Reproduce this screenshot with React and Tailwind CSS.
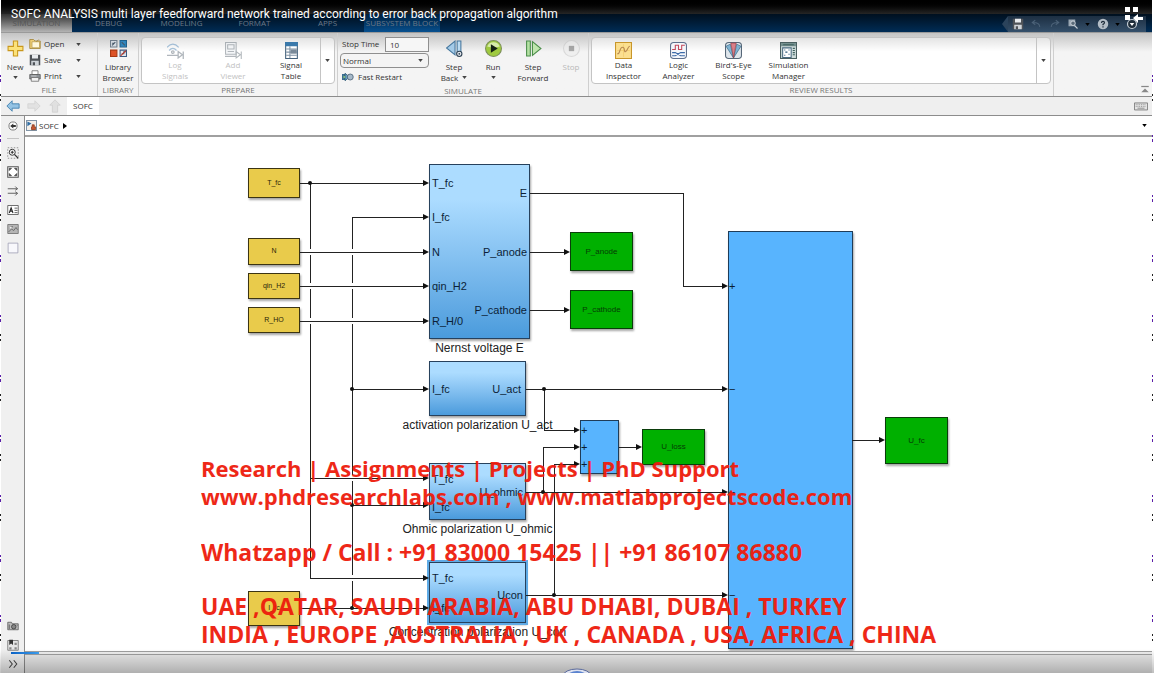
import React, { useState } from 'react';

const Caret = ({ className = 'text-[#444]' }) => (
	<svg width="5" height="3" viewBox="0 0 6 4" className={`shrink-0 ${className}`}>
		<path d="M0 0h6L3 4z" fill="currentColor" />
	</svg>
);

const icons = {
	new: (
		<path d="M6 1h4v5h5v4h-5v5H6v-5H1V6h5z" fill="#fbe27a" stroke="#c9971c" />
	),
	open: (
		<>
			<path d="M1 2h5l2 2h7v10H1z" fill="#f0cf74" stroke="#9a7b2e" />
			<path d="M4 5h10v8H4z" fill="#fff8dc" stroke="#b79a4f" />
			<path d="M10 5l3-3" stroke="#9a7b2e" />
		</>
	),
	save: (
		<>
			<path d="M1 1h14v14H1z" fill="#4f5358" />
			<path d="M4 1h8v5H4z" fill="#e8ebee" />
			<path d="M3 9h10v6H3z" fill="#cfd4d9" />
			<path d="M5 11h3v4H5z" fill="#4f5358" />
		</>
	),
	print: (
		<>
			<path d="M4 1h8v5H4z" fill="#fff" stroke="#666" />
			<path d="M1 6h14v6H1z" fill="#8d9297" stroke="#555" />
			<path d="M3 10h10v5H3z" fill="#f2f2f2" stroke="#666" />
			<path d="M3 8h7" stroke="#ddd" />
		</>
	),
	library: (
		<>
			<path d="M.5.5h6v6h-6z" fill="#d5dbe2" stroke="#6f7c8a" />
			<path d="M9.500.5h6v6h-6z" fill="#2f86bd" stroke="#1c5f8c" />
			<path d="M.5 9.500h6v6h-6z" fill="#dd5226" stroke="#a83812" />
			<path d="M9.500 9.500h6v6h-6z" fill="#e4e8ee" stroke="#3b5a82" />
			<path d="M2 5l3-3M11 2l3 3M11 13h2v-2h2M2 3h2" stroke="#456" fill="none" />
			<path d="M10 15l5-5" stroke="#c0392b" />
		</>
	),
	logSignals: (
		<g fill="none" stroke="#7d8791" strokeWidth="1.200">
			<path d="M0 5q5.500-6 11 0M2 8q3.500-4 7 0" stroke="#6f9cc4" />
			<circle cx="5.500" cy="9.500" r="1.200" />
			<path d="M0 12.500h10M10.500 9v6l4-3zM15.300 9v7" />
		</g>
	),
	addViewer: (
		<g fill="none" stroke="#7f8890">
			<path d="M.5.5h10v11H.5z" fill="#eef1f4" />
			<path d="M2.500 2.500h6v4h-6zM2.500 9h6" />
			<path d="M0 13.500h10M10.500 9v6l4-3zM15.300 9v7" />
		</g>
	),
	signalTable: (
		<>
			<path d="M2.500.5h11v15h-11z" fill="#fff" stroke="#44617c" />
			<path d="M2 0h12v4H2z" fill="#3a79ab" />
			<path d="M3 6.500h10M3 9.500h10M3 12.500h10M6.500 4v11" stroke="#8093a5" />
			<path d="M7 7h6v4H7z" fill="#7a8a99" />
		</>
	),
	fastRestart: (
		<>
			<path d="M0 4h5v8H0z" fill="#3c6e91" />
			<path d="M4 3l6 5-6 5z" fill="#68a0c0" stroke="#24506d" />
			<circle cx="11" cy="8" r="4" fill="#a6b8c8" stroke="#435a70" />
			<path d="M2 6l3 2-3 2z" fill="#93cf7e" />
		</>
	),
	stepBack: (
		<>
			<path d="M8.500 1v13L.5 7.500z" fill="#a4cbe8" stroke="#46779e" />
			<path d="M10.500 1h3.500v12h-3.500z" fill="#bcdcf2" stroke="#46779e" />
			<circle cx="12.500" cy="13" r="2.500" fill="#e4e8ed" stroke="#2f4254" />
			<circle cx="12.500" cy="13" r=".8" fill="#2f4254" />
		</>
	),
	run: (
		<>
			<circle cx="8" cy="8" r="7.500" fill="#9fca3f" stroke="#7d8f5d" />
			<path d="M2 6a6.500 6.500 0 0 1 12 0q-6 2-12 0" fill="#d7ebaa" />
			<path d="M5.500 4l6.500 4-6.500 4z" fill="#142013" />
		</>
	),
	stepForward: (
		<>
			<path d="M1.500 1h3.500v14H1.500z" fill="#b4e0a3" stroke="#4b8d4a" />
			<path d="M7 1.500v13L15 8z" fill="#bfe6ae" stroke="#4b8d4a" />
		</>
	),
	stop: (
		<>
			<circle cx="8" cy="8" r="7.500" fill="#ececec" stroke="#c8c8c8" />
			<path d="M5.500 5.500h5v5h-5z" fill="#777" />
		</>
	),
	dataInspector: (
		<>
			<path d="M.5.5h15v15H.5z" fill="#fbdf8f" stroke="#c8962b" />
			<path d="M2 8h12M8 2v12" stroke="#eec560" strokeWidth=".5" />
			<path d="M2 11c3 1 2-6 5-6s1 5 3 4 2-5 4-5" fill="none" stroke="#b98a52" />
		</>
	),
	logicAnalyzer: (
		<>
			<rect x=".5" y=".5" width="15" height="15" rx="3" fill="#f4f6fa" stroke="#5d6f8c" />
			<path d="M2 7h3V3h3v4h3V3h3" fill="none" stroke="#c34a5c" />
			<path d="M2 10h3l5 3h4M2 13h3l5-3h4" fill="none" stroke="#3b6aa8" />
		</>
	),
	birdsEye: (
		<>
			<rect x=".5" y=".5" width="15" height="15" rx="3" fill="#dfe6ec" stroke="#566778" />
			<path d="M8 15L1 4l4-2z" fill="#7fb3d2" stroke="#33617f" strokeWidth=".6" />
			<path d="M8 15l7-11-4-2z" fill="#7fb3d2" stroke="#33617f" strokeWidth=".6" />
			<path d="M8 15L5.500 1h5z" fill="#d98089" stroke="#9b3a44" strokeWidth=".6" />
		</>
	),
	simManager: (
		<>
			<path d="M.5.5h15v15H.5z" fill="#cfdcdb" stroke="#4a5f60" />
			<path d="M1 1h14v3H1z" fill="#6f8b8a" />
			<path d="M2.500 5.500h8v9h-8z" fill="#fff" stroke="#4a6a80" />
			<path d="M4 7h1v1H4zM8 7h1v1H8zM5 9h2v1H5zM8 11h1v1H8zM4 12h1v1H4z" fill="#2b5878" />
			<path d="M12 6h2M12 8h2M12 10h2M12 12h2M3 2.500h10" stroke="#40615f" />
		</>
	),
	keyboard: (
		<>
			<path d="M.5 4.500h15v8H.5z" fill="#e4e4e4" stroke="#777" />
			<path d="M2 6.500h12M2 8.500h12" stroke="#888" strokeDasharray="1 1" />
			<path d="M4 10.500h8" stroke="#888" />
		</>
	),
	collapse: (
		<>
			<path d="M2 4h12" stroke="#888" strokeWidth="2" />
			<path d="M2 13h12L8 7z" fill="#888" />
		</>
	),
	hide: (
		<>
			<circle cx="8" cy="8" r="6.500" fill="#fff" stroke="#777" strokeWidth="1.500" />
			<path d="M3.500 8l5-4v2.500h4v3h-4V12z" fill="#333" />
		</>
	),
	zoom: (
		<>
			<path d="M1 1h14v14H1z" fill="none" stroke="#777" strokeDasharray="2 2" />
			<circle cx="7" cy="7" r="4" fill="#fff" stroke="#333" strokeWidth="1.300" />
			<path d="M7 5v4M5 7h4M10 10l5 5" stroke="#333" strokeWidth="1.500" />
		</>
	),
	fit: (
		<>
			<path d="M1 1h14v14H1z" fill="#fff" stroke="#555" strokeWidth="1.400" />
			<path d="M3 6V3h3L3 6M10 3h3v3l-3-3M3 10v3h3l-3-3M13 10v3h-3l3-3" fill="#444" stroke="#444" />
		</>
	),
	arrows: (
		<path d="M1 5h13M1 11h13M11 2l3 3-3 2M11 9l3 2-3 3" fill="none" stroke="#555" strokeWidth="1.200" />
	),
	annotation: (
		<>
			<path d="M1 2h14v12H1z" fill="#fff" stroke="#444" />
			<path d="M3 12l2.500-7L8 12M4 9.500h3" fill="none" stroke="#222" strokeWidth="1.400" />
			<path d="M10 5.500h4M10 8.500h4M10 11.500h4" stroke="#333" />
		</>
	),
	image: (
		<>
			<path d="M1 2h14v12H1z" fill="#b5b5b5" stroke="#666" />
			<path d="M2 12l4-4 3 2 3-4 2 3M4 5h4" fill="none" stroke="#555" />
			<circle cx="5" cy="6" r="1.200" fill="#eee" />
		</>
	),
	area: (
		<path d="M1.500 1.500h13v13h-13z" fill="#f8f8fc" stroke="#9a9ab0" />
	),
	camera: (
		<>
			<path d="M1 3h5l1 2h8v8H1z" fill="#bbb" stroke="#555" />
			<circle cx="9" cy="9" r="3" fill="#888" stroke="#333" />
			<path d="M3 6v6M13 7h1" stroke="#444" />
		</>
	),
	browser: (
		<>
			<path d="M1 2h14v13H1z" fill="#e6e6e6" stroke="#666" />
			<path d="M3 1h5v7L5.500 6 3 8z" fill="#333" />
			<path d="M3 11h3v3H3zM10 5h3v3h-3zM10 11h3v3h-3z" fill="#888" />
		</>
	),
	more: (
		<path d="M3 3l4 5-4 5M9 3l4 5-4 5" fill="none" stroke="#444" strokeWidth="1.400" />
	),
	back: (
		<path d="M1 8l6-6v3.500h8v5H7V14z" fill="#94c3e4" stroke="#3f7fae" />
	),
	forward: (
		<path d="M15 8L9 2v3.500H1v5h8V14z" fill="#e2e2e2" stroke="#d4d4d4" />
	),
	up: (
		<path d="M8 1l6 6h-3v8H5V7H2z" fill="#e0e0e0" stroke="#d0d0d0" />
	),
	model: (
		<>
			<path d="M.5.5h15v15H.5z" fill="#f4efe9" stroke="#4d6a86" strokeWidth="1.200" />
			<path d="M2 2l6 3-6 4z" fill="#2e6da4" />
			<path d="M9 7h3v3h2v4H8v-4h1z" fill="#c8562f" stroke="#7c2f15" />
		</>
	),
	undo: (
		<path d="M13 12q0-6-9-6M7 3L3 6l4 3" fill="none" stroke="#4b6177" strokeWidth="1.400" />
	),
	redo: (
		<path d="M3 12q0-6 9-6M9 3l4 3-4 3" fill="none" stroke="#4b6177" strokeWidth="1.400" />
	),
	find: (
		<>
			<path d="M2 2h9v9H2z" fill="#9aa7b3" />
			<circle cx="8" cy="7" r="3" fill="#5b6b7a" stroke="#dde3e8" />
			<path d="M10 10l4 4" stroke="#c5ced6" strokeWidth="1.500" />
		</>
	),
	help: (
		<>
			<circle cx="8" cy="8" r="7" fill="#b4bdc6" />
			<path d="M6 6.500q0-2 2-2t2 1.800q0 1-2 2.200v1M8 11v1.500" fill="none" stroke="#1e2c3a" strokeWidth="1.600" />
		</>
	),
	options: (
		<>
			<circle cx="8" cy="8" r="6" fill="#1f2d3a" stroke="#c3ccd4" strokeWidth="1.600" />
			<path d="M5 6.500h6L8 10.500z" fill="#fff" />
		</>
	),
};

const Icon = ({ name, className = 'size-4' }) => (
	<svg viewBox="0 0 16 16" className={`shrink-0 ${className}`}>
		{icons[name]}
	</svg>
);

const tabs = ['DEBUG', 'MODELING', 'FORMAT', 'APPS'];

const Group = ({ label, className = '', children }) => (
	<section className={`flex h-[63px] flex-col border-r border-[#cfcfcf] ${className}`}>
		<div className="flex flex-1 pt-[3px]">{children}</div>
		<h2 className="h-3 text-center text-[8px] leading-3 text-[#777]">{label}</h2>
	</section>
);

// big button with the icon on top of one or two lines of text
const ToolButton = ({ icon, lines, caret, disabled, className = '' }) => (
	<button
		type="button"
		disabled={disabled}
		className={`flex flex-col items-center leading-[11px] ${disabled ? 'text-[#b9b9b9]' : 'text-[#333]'} ${className}`}
	>
		<Icon name={icon} className={disabled ? 'size-[17px] opacity-60' : 'size-[17px]'} />
		<span className="mt-1">{lines[0]}</span>
		<span className="flex h-[11px] items-center gap-1">
			{lines[1]}
			{caret && <Caret />}
		</span>
	</button>
);

const GalleryButton = ({ icon, lines, disabled, className }) => (
	<button
		type="button"
		disabled={disabled}
		className={`flex flex-col items-center pt-1 leading-[11px] ${disabled ? 'text-[#c2c2c2]' : 'text-[#333]'} ${className}`}
	>
		<Icon name={icon} className={disabled ? 'size-[17px] opacity-60' : 'size-[17px]'} />
		<span>{lines[0]}</span>
		<span>{lines[1]}</span>
	</button>
);

const Gallery = ({ children }) => (
	<div className="mx-0.5 mt-px flex h-[47px] flex-1 items-start rounded-sm border border-[#c4c4c4] bg-linear-to-b from-[#e4e4e4] to-white to-30%">
		{children}
		<button type="button" aria-label="More" className="ml-auto flex h-full w-[14px] items-center justify-center border-l border-[#c4c4c4]">
			<Caret />
		</button>
	</div>
);

const fileItems = [
	{ icon: 'open', label: 'Open' },
	{ icon: 'save', label: 'Save' },
	{ icon: 'print', label: 'Print' },
];

const reviewItems = [
	{ icon: 'dataInspector', lines: ['Data', 'Inspector'] },
	{ icon: 'logicAnalyzer', lines: ['Logic', 'Analyzer'] },
	{ icon: 'birdsEye', lines: ["Bird's-Eye", 'Scope'] },
	{ icon: 'simManager', lines: ['Simulation', 'Manager'] },
];

const Toolstrip = () => {
	const [stopTime, setStopTime] = useState('10');
	const [mode, setMode] = useState('Normal');

	return (
		<div className="flex border-t border-b border-t-[#9a9a9a] border-b-[#8c8c8c] bg-linear-to-b from-[#c4c4c4] to-[#f4f4f4] to-30% text-[8px]">
			<Group label="FILE" className="w-[97px]">
				<ToolButton icon="new" lines={['New', '']} caret className="w-7 pt-1" />
				<div className="flex flex-col">
					{fileItems.map((item) => (
						<button key={item.label} type="button" className="flex h-4 w-[52px] items-center gap-[3px] text-[#333]">
							<Icon name={item.icon} className="size-3" />
							<span>{item.label}</span>
							<Caret className="ml-auto text-[#444]" />
						</button>
					))}
				</div>
			</Group>
			<Group label="LIBRARY" className="w-[41px]">
				<ToolButton icon="library" lines={['Library', 'Browser']} className="w-full pt-1" />
			</Group>
			<Group label="PREPARE" className="w-[199px]">
				<Gallery>
					<GalleryButton icon="logSignals" lines={['Log', 'Signals']} disabled className="ml-1 w-[58px]" />
					<GalleryButton icon="addViewer" lines={['Add', 'Viewer']} disabled className="w-[58px]" />
					<GalleryButton icon="signalTable" lines={['Signal', 'Table']} className="w-[58px]" />
				</Gallery>
			</Group>
			<Group label="SIMULATE" className="w-[251px]">
				<div className="flex w-[93px] flex-col px-0.5 text-[#333]">
					<div className="flex h-4 items-center justify-between">
						<label htmlFor="stopTime" className="pl-0.5">Stop Time</label>
						<input
							id="stopTime"
							value={stopTime}
							onChange={(e) => setStopTime(e.target.value)}
							className="h-[15px] w-11 border border-[#8f8f8f] bg-[#f6f6f6] px-1"
						/>
					</div>
					<div className="relative flex h-[17px] items-center">
						<select
							aria-label="Simulation mode"
							value={mode}
							onChange={(e) => setMode(e.target.value)}
							className="h-[15px] w-full appearance-none rounded-sm border border-[#8f8f8f] bg-[#f4f4f4] px-0.5"
						>
							<option>Normal</option>
							<option>Accelerator</option>
						</select>
						<Caret className="pointer-events-none absolute right-1.5 text-[#444]" />
					</div>
					<button type="button" className="flex h-4 items-center gap-1 pl-0.5">
						<Icon name="fastRestart" className="size-3" />
						Fast Restart
					</button>
				</div>
				<ToolButton icon="stepBack" lines={['Step', 'Back']} caret className="w-[46px] pt-1" />
				<ToolButton icon="run" lines={['Run', '']} caret className="w-8 pt-1" />
				<ToolButton icon="stepForward" lines={['Step', 'Forward']} className="w-12 pt-1" />
				<ToolButton icon="stop" lines={['Stop', '']} disabled className="w-7 pt-1" />
			</Group>
			<Group label="REVIEW RESULTS" className="flex-1">
				<Gallery>
					{reviewItems.map((item) => (
						<GalleryButton key={item.icon} icon={item.icon} lines={item.lines} className="w-[55px] first:ml-1" />
					))}
				</Gallery>
			</Group>
			<div className="flex w-[98px] items-end justify-end p-0.5">
				<button type="button" aria-label="Minimize toolstrip">
					<Icon name="collapse" className="size-2.5" />
				</button>
			</div>
		</div>
	);
};

const QuickAccess = () => (
	<div className="mr-1.5 ml-auto flex h-4 items-center self-end">
		<svg width="6" height="16" viewBox="0 0 6 16">
			<path d="M6 0v16L0 8z" fill="#2b435b" />
		</svg>
		<div className="flex h-4 w-[138px] items-center justify-between bg-linear-to-b from-[#1d2f42] to-[#35506b] pr-2 pl-1">
			<button type="button" aria-label="Save"><Icon name="save" className="size-3" /></button>
			<button type="button" aria-label="Undo"><Icon name="undo" className="size-3" /></button>
			<button type="button" aria-label="Redo"><Icon name="redo" className="size-3" /></button>
			<button type="button" aria-label="Find" className="flex items-center gap-1.5">
				<Icon name="find" className="size-3" />
				<Caret className="text-black" />
			</button>
			<button type="button" aria-label="Help" className="flex items-center gap-1.5">
				<Icon name="help" className="size-3" />
				<Caret className="text-black" />
			</button>
			<button type="button" aria-label="Options"><Icon name="options" className="size-3" /></button>
		</div>
	</div>
);

const wires = [
	'M275 46H400',
	'M285 46V441H400',
	'M285 341H400',
	'M327 471V80H400',
	'M275 471H400',
	'M327 252H400',
	'M327 368H400',
	'M505 56H658V149H699',
	'M505 115H541',
	'M505 173H541',
	'M501 252H699',
	'M519 252V293H551',
	'M501 355H699',
	'M518 355V310H551',
	'M501 458H699',
	'M529 458V327H551',
	'M594 310H613',
	'M827 303H856',
];

const inputWires = ['M275 115H400', 'M275 149H400', 'M275 184H400'];

const junctions = [
	[285, 46], [327, 252], [327, 368], [327, 471], [519, 252], [518, 355], [529, 458],
];

const Wires = () => (
	<svg width="900" height="515" viewBox="0 0 900 515" className="absolute top-0 left-0" fill="none" stroke="#222">
		<defs>
			<marker id="arrow" markerUnits="userSpaceOnUse" markerWidth="6" markerHeight="6" refX="2" refY="3" orient="auto">
				<path d="M0 0l6 3-6 3z" fill="#111" stroke="none" />
			</marker>
		</defs>
		<g shapeRendering="crispEdges">
			{wires.map((d) => <path key={d} d={d} markerEnd="url(#arrow)" />)}
			{/* line hops: the vertical wires are cut where an input crosses them */}
			<path d="M285 112v6M285 146v6M285 181v6M327 112v6M327 146v6M327 181v6M327 338v6M327 438v6" stroke="#fff" strokeWidth="3" />
			<path d="M320 341h14M320 441h14" />
			{inputWires.map((d) => <path key={d} d={d} markerEnd="url(#arrow)" />)}
		</g>
		{junctions.map(([x, y]) => (
			<circle key={`${x}-${y}`} cx={x} cy={y} r="2" fill="#111" stroke="none" />
		))}
	</svg>
);

const constants = [
	{ label: 'T_fc', place: 'top-[31px] h-[30px]' },
	{ label: 'N', place: 'top-[101px] h-[27px]' },
	{ label: 'qin_H2', place: 'top-[136px] h-[26px]' },
	{ label: 'R_HO', place: 'top-[170px] h-[26px]' },
	{ label: 'I_fc', place: 'top-[454px] h-[35px]' },
];

const outputs = [
	{ label: 'P_anode', place: 'top-[95px] left-[545px] h-[39px]' },
	{ label: 'P_cathode', place: 'top-[153px] left-[545px] h-[39px]' },
	{ label: 'U_loss', place: 'top-[292px] left-[617px] h-9' },
	{ label: 'U_fc', place: 'top-[280px] left-[860px] h-[47px]' },
];

const subsystems = [
	{
		name: 'Nernst voltage E',
		place: 'top-[27px] left-[404px] h-[175px] w-[101px]',
		ports: [
			['T_fc', 'left-0.5 top-[11px]'],
			['I_fc', 'left-0.5 top-[45px]'],
			['N', 'left-0.5 top-[80px]'],
			['qin_H2', 'left-0.5 top-[114px]'],
			['R_H/0', 'left-0.5 top-[149px]'],
			['E', 'right-0.5 top-[21px]'],
			['P_anode', 'right-0.5 top-[80px]'],
			['P_cathode', 'right-0.5 top-[138px]'],
		],
	},
	{
		name: 'activation polarization U_act',
		place: 'top-[224px] left-[404px] h-[55px] w-[97px]',
		ports: [
			['I_fc', 'left-0.5 top-5'],
			['U_act', 'right-1 top-5'],
		],
	},
	{
		name: 'Ohmic polarization U_ohmic',
		place: 'top-[326px] left-[404px] h-[57px] w-[97px]',
		ports: [
			['T_fc', 'left-0.5 top-2'],
			['I_fc', 'left-0.5 top-9'],
			['U_ohmic', 'right-0.5 top-[21px]'],
		],
	},
	{
		name: 'Concentration polarization U_con',
		selected: true,
		place: 'top-[425px] left-[404px] h-[61px] w-[97px]',
		ports: [
			['T_fc', 'left-0.5 top-2'],
			['I_fc', 'left-0.5 top-[38px]'],
			['Ucon', 'right-0.5 top-[25px]'],
		],
	},
];

const SumBlock = ({ place, marks }) => (
	<div className={`absolute border border-[#1f3c58] bg-[#58b4fe] shadow-[1px_2px_2px_rgba(0,0,0,0.35)] ${place}`}>
		{marks.map(([sign, pos]) => (
			<span key={pos} className={`absolute left-0 text-[11px] leading-3 text-[#0b1d33] ${pos}`}>{sign}</span>
		))}
	</div>
);

const Diagram = () => (
	<div className="absolute inset-0 overflow-hidden font-['Liberation_Sans',sans-serif]">
		{constants.map((block) => (
			<div
				key={block.label}
				className={`absolute left-[223px] flex w-[52px] items-center justify-center border border-[#3b3413] bg-[#e9cb4b] text-[7px] text-[#2b2508] shadow-[1px_2px_2px_rgba(0,0,0,0.35)] ${block.place}`}
			>
				{block.label}
			</div>
		))}
		{subsystems.map((block) => (
			<div
				key={block.name}
				className={`absolute border border-[#27415c] bg-linear-to-b from-[#acdcff] from-20% to-[#4a9bdc] shadow-[1px_2px_2px_rgba(0,0,0,0.35)] ${block.selected ? 'outline-2 outline-[#5fabe6]' : ''} ${block.place}`}
			>
				{block.ports.map(([port, pos]) => (
					<span key={port} className={`absolute text-[11px] leading-[14px] text-[#0c1f38] ${pos}`}>{port}</span>
				))}
				<span className="absolute top-full left-1/2 -translate-x-1/2 pt-px text-[12px] leading-[18px] whitespace-nowrap text-[#222]">
					{block.name}
				</span>
			</div>
		))}
		<SumBlock
			place="top-[283px] left-[555px] h-[54px] w-[39px]"
			marks={[['+', 'top-[3px]'], ['+', 'top-5'], ['+', 'top-[37px]']]}
		/>
		<SumBlock
			place="top-[94px] left-[703px] h-[418px] w-[125px]"
			marks={[['+', 'top-12'], ['−', 'top-[151px]'], ['−', 'top-[254px]'], ['−', 'top-[357px]']]}
		/>
		{outputs.map((block) => (
			<div
				key={block.label}
				className={`absolute flex w-[63px] items-center justify-center border border-[#0b3d0b] bg-[#00b000] text-[8px] text-[#053c05] shadow-[1px_2px_2px_rgba(0,0,0,0.35)] ${block.place}`}
			>
				{block.label}
			</div>
		))}
		<Wires />
	</div>
);

const Watermark = () => (
	<div className="pointer-events-none absolute top-[317px] left-[176px] leading-7 font-bold whitespace-pre text-[#ee1c0c] opacity-95">
		<div className="text-[22px] leading-7">
			<p>Research | Assignments | Projects | PhD Support</p>
			<p>www.phdresearchlabs.com , www.matlabprojectscode.com</p>
		</div>
		<div className="text-[23px] leading-7">
			<p className="pt-7">Whatzapp / Call : +91 83000 15425 || +91 86107 86880</p>
			<p className="pt-[26px]">UAE ,QATAR, SAUDI ARABIA, ABU DHABI, DUBAI , TURKEY</p>
			<p>INDIA , EUROPE ,AUSTRALIA , UK , CANADA , USA, AFRICA , CHINA</p>
		</div>
	</div>
);

const railTools = [
	['zoom', 'Zoom'],
	['fit', 'Fit to view'],
	['arrows', 'Signals'],
	['annotation', 'Annotation'],
	['image', 'Image'],
	['area', 'Area'],
];

const railFooter = [
	['camera', 'Screenshot'],
	['browser', 'Model browser'],
	['more', 'More tools'],
];

const Rail = () => (
	<nav className="flex w-6 shrink-0 flex-col items-center border-r border-[#8c8c8c] bg-[#f0f0f0]">
		<button type="button" aria-label="Hide browser" className="flex h-5 items-center"><Icon name="hide" className="size-2.5" /></button>
		<hr className="mt-0.5 mb-1 w-3 border-[#c4c4c4]" />
		{railTools.map(([icon, label]) => (
			<button key={icon} type="button" aria-label={label} className="flex h-[19px] items-center">
				<Icon name={icon} className="size-3" />
			</button>
		))}
		<div className="mt-auto flex flex-col">
			{railFooter.map(([icon, label]) => (
				<button key={icon} type="button" aria-label={label} className="flex h-[19px] items-center">
					<Icon name={icon} className="size-3" />
				</button>
			))}
		</div>
	</nav>
);

// the sliver of the window behind, seen along the edge
const EdgeStrip = ({ id, className }) => (
	<svg className={`shrink-0 bg-white ${className}`}>
		<defs>
			<pattern id={id} width="2" height="60" patternUnits="userSpaceOnUse">
				<path d="M0 15h1v2H0zM0 19h1v3H0z" fill="#5a1fa8" />
				<path d="M0 34h1v2H0zM0 39h1v2H0z" fill="#222" />
			</pattern>
		</defs>
		<rect y="66" width="2" height="100%" fill={`url(#${id})`} />
	</svg>
);

const App = () => {
	return (
		<div className="relative flex min-h-screen overflow-hidden bg-white font-['Open_Sans',sans-serif]">
			<EdgeStrip id="edge-left" className="w-px" />
			<div className="flex min-w-0 flex-1 flex-col">
				<div className="h-[14px] bg-linear-to-b from-black to-[#262626]" />
				<div className="flex h-[18px] bg-linear-to-b from-[#00101f] to-[#002c56] text-[8px] text-[#6b7886]">
					<button type="button" className="w-[71px] bg-linear-to-b from-[#333] to-[#b4b4b4] text-[#555]">SIMULATION</button>
					{tabs.map((tab) => (
						<button key={tab} type="button" className="w-[73px]">{tab}</button>
					))}
					<button type="button" className="w-[76px] bg-linear-to-b from-[#00203f] to-[#08508f]">SUBSYSTEM BLOCK</button>
					<QuickAccess />
				</div>
				<Toolstrip />
				<div className="flex h-[19px] items-center border-b border-[#8c8c8c] bg-[#efefef] pl-[5px]">
					<button type="button" aria-label="Back" className="w-[21px]"><Icon name="back" className="size-3.5" /></button>
					<button type="button" aria-label="Forward" className="w-[21px]"><Icon name="forward" className="size-3.5" /></button>
					<button type="button" aria-label="Up" className="w-[19px]"><Icon name="up" className="size-3.5" /></button>
					<button type="button" className="h-full w-8 bg-white text-[8px] text-[#333]">SOFC</button>
					<button type="button" aria-label="Keyboard" className="mr-1 ml-auto"><Icon name="keyboard" className="size-3.5" /></button>
				</div>
				<div className="flex flex-1">
					<Rail />
					<div className="flex min-w-0 flex-1 flex-col">
						<div className="flex h-[21px] items-center gap-0.5 border-b-2 border-[#a0a0a0] bg-white px-px text-[8px] text-[#333]">
							<Icon name="model" className="size-[11px]" />
							<a href="#sofc">SOFC</a>
							<svg width="4" height="6" viewBox="0 0 4 6" className="ml-0.5"><path d="M0 0v6l4-3z" /></svg>
							<button type="button" aria-label="Show hierarchy" className="mr-1 ml-auto"><Caret className="text-black" /></button>
						</div>
						<main className="relative min-h-[514px] flex-1 bg-white">
							<Diagram />
							<Watermark />
						</main>
						<div className="h-1 border-y border-[#a0a0a0] bg-[#f0f0f0]" />
						<footer className="h-[18px] bg-[#eaeaea]" />
					</div>
				</div>
			</div>
			<EdgeStrip id="edge-right" className="w-0.5" />

			{/* player chrome over the recording */}
			<div className="pointer-events-none absolute inset-x-0 bottom-0 h-6 bg-linear-to-b from-transparent to-black/25" />
			<progress
				aria-label="Playback"
				value="2.5"
				max="100"
				className="absolute bottom-[19px] left-[11px] h-0.5 w-[96%] appearance-none bg-transparent [&::-webkit-progress-bar]:bg-transparent [&::-webkit-progress-value]:bg-linear-to-r [&::-webkit-progress-value]:from-[#0b63c5] [&::-webkit-progress-value]:to-[#3b9cec]"
			/>
			<svg width="30" height="5" viewBox="0 0 30 5" className="absolute bottom-0 left-1/2 -translate-x-1/2">
				<ellipse cx="15" cy="8" rx="14" ry="7" fill="#dfe3f0" stroke="#5a6a9c" />
				<ellipse cx="15" cy="9" rx="10" ry="6" fill="#5b83cf" />
			</svg>
			<h1 className="absolute top-1.5 left-[11px] font-['Roboto',sans-serif] text-[12px] leading-4 whitespace-nowrap text-white">
				SOFC ANALYSIS multi layer feedforward network trained according to error back propagation algorithm
			</h1>
			<button type="button" aria-label="Show playlist" className="absolute top-[7px] right-2.5">
				<svg width="19" height="16" viewBox="0 0 19 16" fill="#fff">
					<path d="M0 0h5v5H0zM8 0h5v5H8zM0 8h5v5H0zM8 11l5-4v3h5v3h-5v3z" />
				</svg>
			</button>
		</div>
	);
};

export default App;
